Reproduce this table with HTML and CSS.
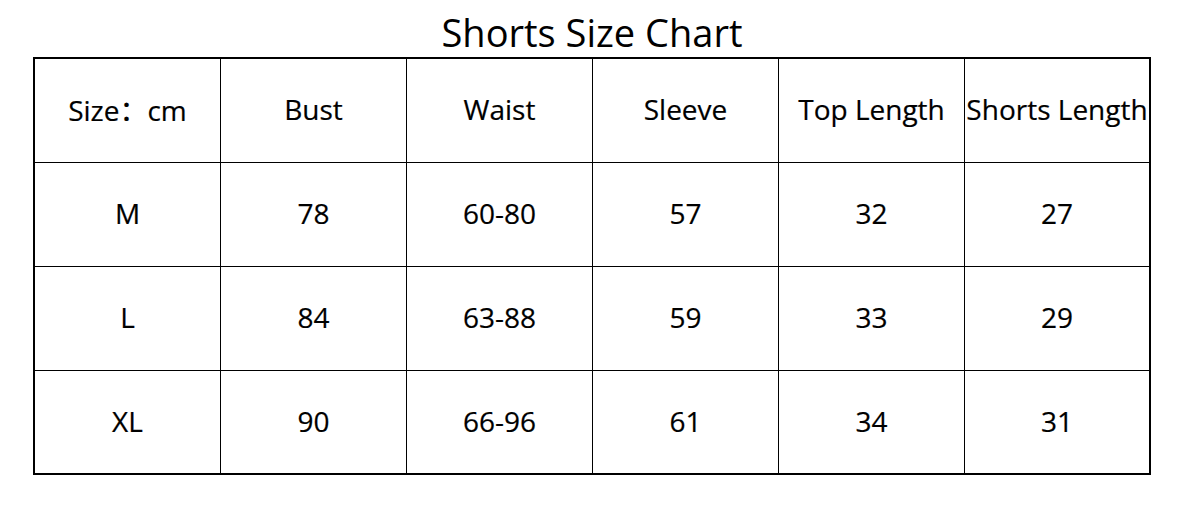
FILE: index.html
```html
<!DOCTYPE html>
<html>
<head>
<meta charset="utf-8">
<link rel="stylesheet" href="styles.css">
</head>
<body>
<div class="page">
  <h1 class="title">Shorts Size Chart</h1>
  <div class="chart">
    <div class="cell">Size：cm</div>
    <div class="cell">Bust</div>
    <div class="cell">Waist</div>
    <div class="cell">Sleeve</div>
    <div class="cell">Top Length</div>
    <div class="cell">Shorts Length</div>

    <div class="cell">M</div>
    <div class="cell">78</div>
    <div class="cell">60-80</div>
    <div class="cell">57</div>
    <div class="cell">32</div>
    <div class="cell">27</div>

    <div class="cell">L</div>
    <div class="cell">84</div>
    <div class="cell">63-88</div>
    <div class="cell">59</div>
    <div class="cell">33</div>
    <div class="cell">29</div>

    <div class="cell">XL</div>
    <div class="cell">90</div>
    <div class="cell">66-96</div>
    <div class="cell">61</div>
    <div class="cell">34</div>
    <div class="cell">31</div>
  </div>
</div>
</body>
</html>
```

FILE: styles.css
```css
html, body {
  margin: 0;
  padding: 0;
  background: #fff;
}

.page {
  width: 1184px;
  height: 526px;
  display: flex;
  flex-direction: column;
  align-items: center;
  font-family: "Open Sans", "Noto Sans CJK SC", sans-serif;
  color: #000;
}

.title {
  margin: 0;
  height: 57px;
  display: flex;
  align-items: center;
  justify-content: center;
  font-size: 38px;
  font-weight: 400;
  line-height: 1;
  padding-top: 6px;
  box-sizing: border-box;
}

.chart {
  display: grid;
  grid-template-columns: repeat(5, 185px) 184px;
  grid-template-rows: 103px 103px 103px 102px;
  gap: 1px;
  background: #000;
  border: 2px solid #000;
}

.cell {
  background: #fff;
  display: flex;
  align-items: center;
  justify-content: center;
  font-size: 28px;
  padding-bottom: 3px;
  box-sizing: border-box;
  white-space: nowrap;
  -webkit-text-stroke: 0.2px #000;
}
```
